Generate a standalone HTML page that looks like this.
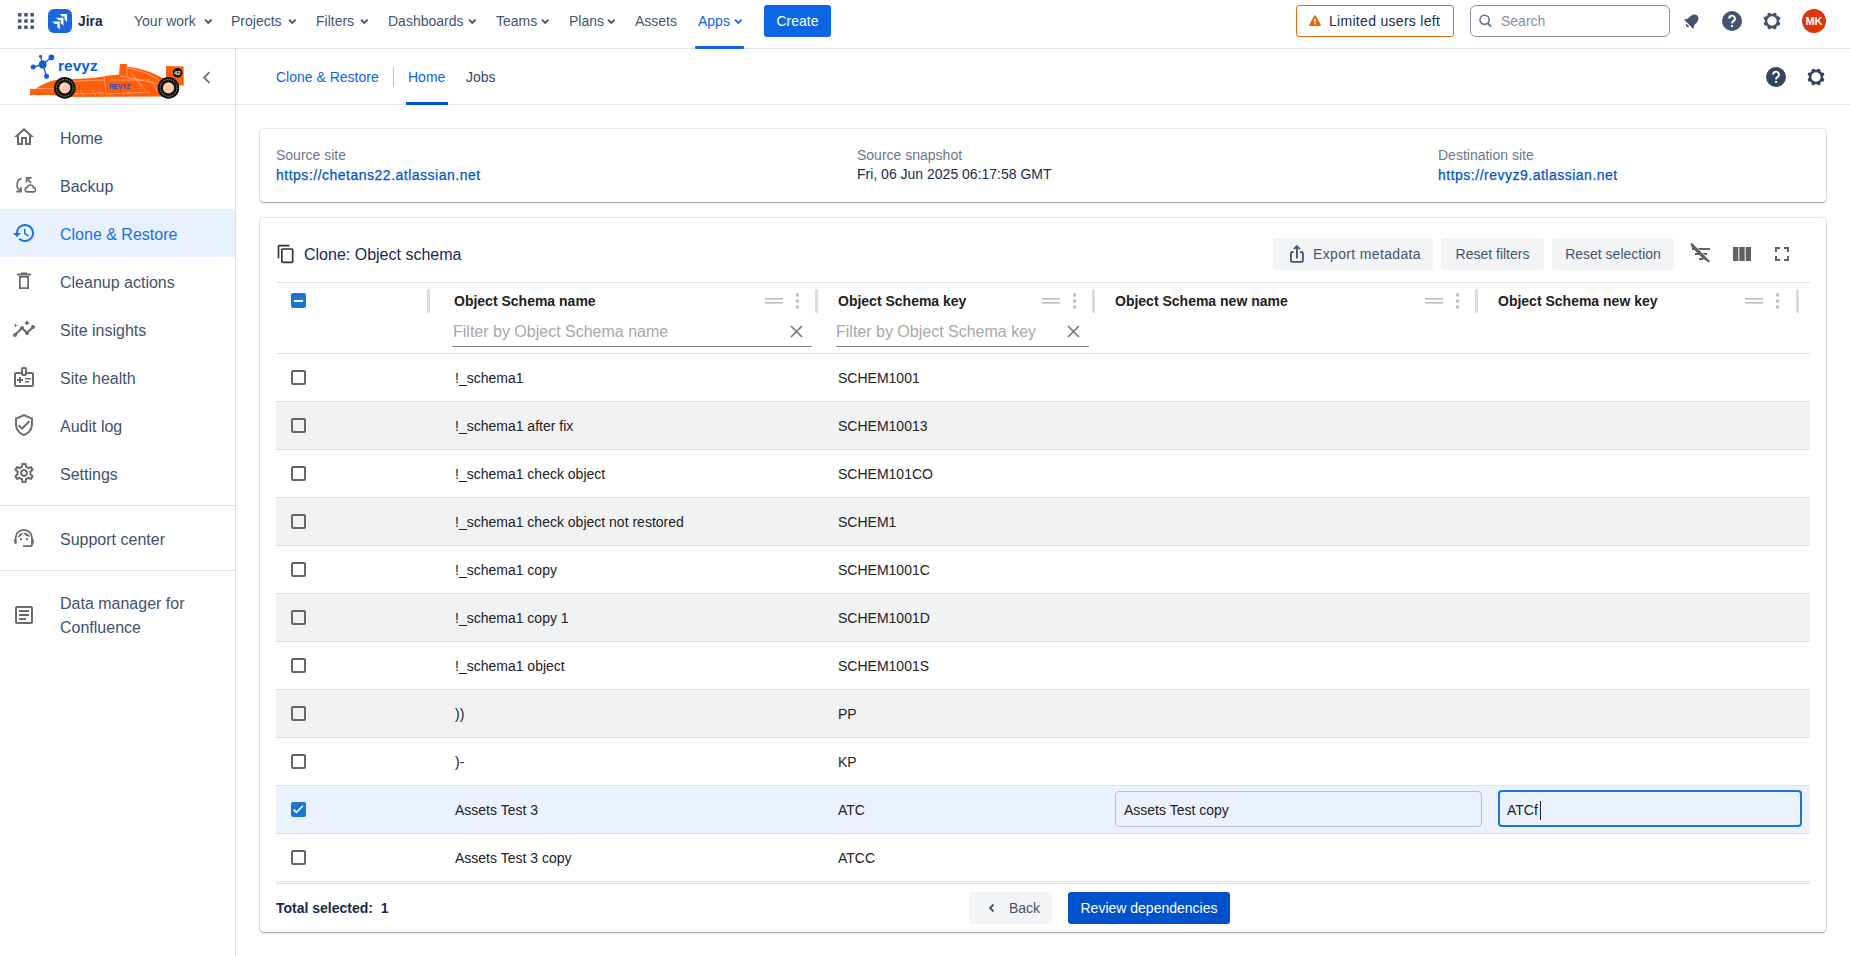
<!DOCTYPE html>
<html><head><meta charset="utf-8">
<style>
*{box-sizing:border-box;margin:0;padding:0}
html,body{width:1850px;height:956px;overflow:hidden;background:#fff;font-family:"Liberation Sans",sans-serif;color:#172b4d}
.a{position:absolute;white-space:nowrap}
svg{display:block}
/* top nav */
#top{position:absolute;left:0;top:0;width:1850px;height:49px;border-bottom:1px solid #dcdfe4;background:#fff}
.nav{font-size:14px;line-height:20px;color:#44546f;top:11px}
.chev{position:absolute;top:18px;margin-left:.5px}
/* sidebar */
#side{position:absolute;left:0;top:49px;width:236px;height:907px;border-right:1px solid #e0e0e0;background:#fff}
.si{position:absolute;left:0;width:235px;height:48px}
.si .t{position:absolute;left:60px;top:16px;font-size:16px;line-height:20px;color:#42526e}
.si svg{position:absolute;left:12px;top:12px}
/* main */
#hdr{position:absolute;left:236px;top:49px;width:1614px;height:56px;border-bottom:1px solid #e4e6ea}
.card{position:absolute;background:#fff;border-radius:4px;box-shadow:0 0 0 1px rgba(9,30,66,.09),0 1px 1px rgba(9,30,66,.28),0 1px 3px rgba(9,30,66,.1)}
.lbl{font-size:14px;line-height:20px;color:#6b778c}
.lnk{font-size:14px;line-height:20px;color:#0055cc;letter-spacing:.5px;-webkit-text-stroke:.25px #0055cc}
.btn{position:absolute;height:32px;border-radius:3px;background:#f3f4f6;font-size:14px;line-height:32px;color:#44546f}
.row{position:absolute;left:276px;width:1534px;height:48px;border-bottom:1px solid #e0e0e0}
.row .c{position:absolute;top:14px;font-size:14px;line-height:20px;color:#212121}
.cb{position:absolute;left:291px;width:15px;height:15px;border:2px solid #666;border-radius:2px}
.hd{font-size:14px;line-height:20px;font-weight:bold;color:#212121;top:291px}
.ph{font-size:16px;line-height:20px;color:#a8a8a8;top:322px}
.ul{position:absolute;top:346px;height:1px;background:#8a8a8a}
.sep{position:absolute;top:289px;width:3px;height:24px;border-radius:2px;background:#dcdcdc}
</style></head>
<body>
<div id="top">
 <svg class="a" style="left:18px;top:13px" width="16" height="16" viewBox="0 0 16 16" fill="#44546f">
  <rect x="0" y="0" width="3.5" height="3.5" rx=".6"/><rect x="6.2" y="0" width="3.5" height="3.5" rx=".6"/><rect x="12.4" y="0" width="3.5" height="3.5" rx=".6"/>
  <rect x="0" y="6.2" width="3.5" height="3.5" rx=".6"/><rect x="6.2" y="6.2" width="3.5" height="3.5" rx=".6"/><rect x="12.4" y="6.2" width="3.5" height="3.5" rx=".6"/>
  <rect x="0" y="12.4" width="3.5" height="3.5" rx=".6"/><rect x="6.2" y="12.4" width="3.5" height="3.5" rx=".6"/><rect x="12.4" y="12.4" width="3.5" height="3.5" rx=".6"/>
 </svg>
 <svg class="a" style="left:48px;top:9px" width="24" height="24" viewBox="0 0 24 24">
  <rect width="24" height="24" rx="6" fill="#1868db"/>
  <path fill="#fff" d="M11.7 4.9H19.1V13L16.6 10.5V7.4H14.2Z"/><path fill="#fff" d="M8 8.7H15.4V16.8L12.9 14.3V11.2H10.5Z"/><path fill="#fff" d="M4.4 12.4H11.8V20.5L9.3 18V14.9H6.9Z"/>
 </svg>
 <div class="a" style="left:78px;top:11px;font-size:15px;line-height:20px;font-weight:bold;color:#172b4d;transform:scaleX(.92);transform-origin:0 0">Jira</div>
 <div class="a nav" style="left:134px">Your work</div>
 <svg class="chev" style="left:203px" width="9" height="7" viewBox="0 0 9 7"><path d="M1 1.6l3.3 3.3 3.3-3.3" stroke="#44546f" stroke-width="1.8" fill="none"/></svg>
 <div class="a nav" style="left:231px">Projects</div>
 <svg class="chev" style="left:287px" width="9" height="7" viewBox="0 0 9 7"><path d="M1 1.6l3.3 3.3 3.3-3.3" stroke="#44546f" stroke-width="1.8" fill="none"/></svg>
 <div class="a nav" style="left:316px">Filters</div>
 <svg class="chev" style="left:359px" width="9" height="7" viewBox="0 0 9 7"><path d="M1 1.6l3.3 3.3 3.3-3.3" stroke="#44546f" stroke-width="1.8" fill="none"/></svg>
 <div class="a nav" style="left:388px">Dashboards</div>
 <svg class="chev" style="left:467px" width="9" height="7" viewBox="0 0 9 7"><path d="M1 1.6l3.3 3.3 3.3-3.3" stroke="#44546f" stroke-width="1.8" fill="none"/></svg>
 <div class="a nav" style="left:496px">Teams</div>
 <svg class="chev" style="left:540px" width="9" height="7" viewBox="0 0 9 7"><path d="M1 1.6l3.3 3.3 3.3-3.3" stroke="#44546f" stroke-width="1.8" fill="none"/></svg>
 <div class="a nav" style="left:569px">Plans</div>
 <svg class="chev" style="left:606px" width="9" height="7" viewBox="0 0 9 7"><path d="M1 1.6l3.3 3.3 3.3-3.3" stroke="#44546f" stroke-width="1.8" fill="none"/></svg>
 <div class="a nav" style="left:635px">Assets</div>
 <div class="a nav" style="left:698px;color:#0c66e4">Apps</div>
 <svg class="chev" style="left:733px" width="9" height="7" viewBox="0 0 9 7"><path d="M1 1.6l3.3 3.3 3.3-3.3" stroke="#0c66e4" stroke-width="1.8" fill="none"/></svg>
 <div class="a" style="left:695px;top:46px;width:49px;height:3px;background:#0c66e4;border-radius:1px"></div>
 <div class="a" style="left:764px;top:5px;width:67px;height:32px;border-radius:3px;background:#0c66e4;color:#fff;font-size:14px;line-height:32px;text-align:center">Create</div>

 <div class="a" style="left:1296px;top:5px;width:158px;height:32px;border:1px solid #e56910;border-radius:3px"></div>
 <svg class="a" style="left:1309px;top:15px" width="12" height="11" viewBox="0 0 12 11"><path d="M6 .9L11.2 10.2H.8z" fill="#e56910" stroke="#e56910" stroke-linejoin="round" stroke-width="1.4"/><rect x="5.3" y="3.6" width="1.4" height="3.6" fill="#fff"/><rect x="5.3" y="8" width="1.4" height="1.4" fill="#fff"/></svg>
 <div class="a nav" style="left:1329px;color:#172b4d;letter-spacing:.3px">Limited users left</div>

 <div class="a" style="left:1470px;top:5px;width:200px;height:32px;border:1px solid #8590a2;border-radius:6px"></div>
 <svg class="a" style="left:1479px;top:14px" width="13" height="14" viewBox="0 0 13 14"><circle cx="5.6" cy="5.8" r="4.6" stroke="#626f86" stroke-width="1.6" fill="none"/><path d="M9 9.4l3 3.2" stroke="#626f86" stroke-width="1.8"/></svg>
 <div class="a nav" style="left:1501px;color:#8590a2">Search</div>

 <svg class="a" style="left:1678px;top:8px" width="26" height="26" viewBox="0 0 26 26"><g transform="translate(10.65 16.25) rotate(45)" fill="#44546f"><path d="M-6.8 0L-4.6 -3.2V-6.5C-4.6 -10 -2.6 -12.2 0 -12.2S4.6 -10 4.6 -6.5V-3.2L6.8 0Z"/><path d="M-1.9 1.2A1.9 1.9 0 0 0 1.9 1.2Z"/></g></svg>
 <svg class="a" style="left:1722px;top:11px" width="20" height="20" viewBox="0 0 20 20"><circle cx="10" cy="10" r="10" fill="#44546f"/><path d="M7.1 7.6a2.9 2.9 0 1 1 4.3 2.5c-.9.5-1.3 1-1.3 1.9v.6" stroke="#fff" stroke-width="1.9" fill="none"/><rect x="9.1" y="14" width="2" height="2" fill="#fff"/></svg>
 <svg class="a" style="left:1762.5px;top:11.9px" width="18" height="18" viewBox="-9 -9 18 18"><g fill="#44546f"><rect x="-1.7" y="-8.7" width="3.4" height="3.6" rx="1.3" transform="rotate(22.5)"/><rect x="-1.7" y="-8.7" width="3.4" height="3.6" rx="1.3" transform="rotate(67.5)"/><rect x="-1.7" y="-8.7" width="3.4" height="3.6" rx="1.3" transform="rotate(112.5)"/><rect x="-1.7" y="-8.7" width="3.4" height="3.6" rx="1.3" transform="rotate(157.5)"/><rect x="-1.7" y="-8.7" width="3.4" height="3.6" rx="1.3" transform="rotate(202.5)"/><rect x="-1.7" y="-8.7" width="3.4" height="3.6" rx="1.3" transform="rotate(247.5)"/><rect x="-1.7" y="-8.7" width="3.4" height="3.6" rx="1.3" transform="rotate(292.5)"/><rect x="-1.7" y="-8.7" width="3.4" height="3.6" rx="1.3" transform="rotate(337.5)"/></g><circle r="6" stroke="#44546f" stroke-width="2.5" fill="none"/></svg>
 <div class="a" style="left:1802px;top:9px;width:24px;height:24px;border-radius:50%;background:#de350b;color:#fff;font-size:11px;font-weight:bold;line-height:24px;text-align:center">MK</div>
</div>
<div id="side">
 <!-- logo -->
 <svg class="a" style="left:28px;top:3px" width="160" height="50" viewBox="28 52 160 50">
  <g stroke="#0b5fd9" stroke-width="1.3">
   <line x1="42.7" y1="64.5" x2="40.5" y2="56.3"/><line x1="42.7" y1="64.5" x2="51.4" y2="57.4"/>
   <line x1="42.7" y1="64.5" x2="33.2" y2="67.1"/><line x1="42.7" y1="64.5" x2="46.6" y2="76.2"/>
  </g>
  <g fill="#0b5fd9">
   <circle cx="42.7" cy="64.5" r="3.9"/><circle cx="40.5" cy="56.3" r="1.6"/><circle cx="51.4" cy="57.4" r="2.8"/>
   <circle cx="33.2" cy="67.1" r="2.5"/><circle cx="46.6" cy="76.2" r="2.5"/>
  </g>
  <text x="58" y="70.6" font-family="Liberation Sans" font-weight="bold" font-size="15.5" fill="#0b5fd9">revyz</text>
  <g fill="#ff5f0a">
   <path d="M30 89h24v6H30z"/>
   <path d="M36 88.5C42 84 50 81 56 80L93 78L109 75.5L119 74.5L120 64H127V66.5C140 68 155 73 164 79L166 80V96.5L60 97L54 95L36 92Z"/>
   <path d="M166 66L183.5 66.5L183.8 85.5L166 85Z"/>
  </g>
  <g stroke="#fff" stroke-width=".45" fill="none" opacity=".85">
   <path d="M36 88.6H55M58 82L104 80M104 76L106 94M106 94L150 92M130 72L145 90M120 76L160 84M70 94L104 93M128 68C140 70 152 75 160 81M110 80L150 80M80 90L84 96M92 90L96 96M60 84H75M127 66.5V76M152 82L158 92"/>
  </g>
  <text x="108.9" y="88.8" font-family="Liberation Sans" font-weight="bold" font-size="6.5" fill="#1f4fbf">REVYZ</text>
  <circle cx="177.6" cy="72.8" r="4.8" fill="#111"/>
  <text x="174" y="75" font-family="Liberation Sans" font-weight="bold" font-size="5.8" fill="#fff">42</text>
  <circle cx="64.8" cy="87.9" r="10.8" fill="#111"/>
  <circle cx="64.8" cy="87.9" r="8.4" fill="none" stroke="#fff" stroke-width="1" stroke-dasharray="1 1.2" opacity=".7"/>
  <circle cx="64.8" cy="87.9" r="5.6" fill="#ffc9a8"/><circle cx="64.8" cy="87.9" r="3.2" fill="none" stroke="#fff" stroke-width=".6" stroke-dasharray=".8 .8"/>
  <circle cx="168.5" cy="87.9" r="10.8" fill="#111"/>
  <circle cx="168.5" cy="87.9" r="8.4" fill="none" stroke="#fff" stroke-width="1" stroke-dasharray="1 1.2" opacity=".7"/>
  <circle cx="168.5" cy="87.9" r="5.6" fill="#ffc9a8"/><circle cx="168.5" cy="87.9" r="3.2" fill="none" stroke="#fff" stroke-width=".6" stroke-dasharray=".8 .8"/>
 </svg>
 <svg class="a" style="left:202px;top:22px" width="9" height="13" viewBox="0 0 9 13"><path d="M7.5 1.2L2 6.5l5.5 5.3" stroke="#707070" stroke-width="1.8" fill="none"/></svg>
 <div class="a" style="left:0;top:55px;width:235px;height:1px;background:#e4e6ea"></div>

 <div class="si" style="top:64px">
  <svg width="24" height="24" viewBox="0 0 24 24" fill="#6b6b6b"><path d="M12 5.69l5 4.5V18h-2v-6H9v6H7v-7.81l5-4.5M12 3L2 12h3v8h6v-6h2v6h6v-8h3L12 3z"/></svg>
  <div class="t">Home</div></div>
 <div class="si" style="top:112px">
  <svg width="24" height="24" viewBox="12 173 24 24" fill="none" stroke="#6b6b6b" stroke-width="1.7"><path d="M21.5 178.4A5.9 6.6 0 0 0 20.2 190.6"/><path d="M16.2 191.6H21V187.2"/><path d="M26.6 182.6V177.8H31.6M26.8 178L31 183.3"/><path d="M26.6 191.8H33.4A2.1 2.1 0 0 0 33.6 187.6A3.3 3.3 0 0 0 27.2 187.4A2.3 2.3 0 0 0 26.6 191.8Z"/></svg>
  <div class="t">Backup</div></div>
 <div class="si" style="top:160px;background:#e8f1fe">
  <svg width="24" height="24" viewBox="0 0 24 24" fill="#1a6fe0"><path d="M13 3c-4.97 0-9 4.03-9 9H1l3.89 3.89.07.14L9 12H6c0-3.87 3.13-7 7-7s7 3.13 7 7-3.13 7-7 7c-1.93 0-3.68-.79-4.94-2.06l-1.42 1.42C8.27 19.99 10.51 21 13 21c4.97 0 9-4.03 9-9s-4.03-9-9-9zm-1 5v5l4.28 2.54.72-1.21-3.5-2.08V8H12z"/></svg>
  <div class="t" style="color:#1a6fe0">Clone &amp; Restore</div></div>
 <div class="si" style="top:208px">
  <svg width="24" height="24" viewBox="0 0 24 24" fill="#6b6b6b"><path d="M7 7h10v13H7zM8.8 8.8v9.4h6.4V8.8zM5 4.5h14v2H5zM9 3.5h6v1.5H9z"/></svg>
  <div class="t">Cleanup actions</div></div>
 <div class="si" style="top:256px">
  <svg width="24" height="24" viewBox="0 0 24 24" fill="#6b6b6b"><path d="M21 8c-1.45 0-2.26 1.44-1.93 2.51l-3.55 3.56c-.3-.09-.74-.09-1.04 0l-2.55-2.55C12.27 10.45 11.46 9 10 9c-1.45 0-2.27 1.44-1.93 2.52l-4.56 4.55C2.44 15.74 1 16.55 1 18c0 1.1.9 2 2 2 1.45 0 2.26-1.44 1.93-2.51l4.55-4.56c.3.09.74.09 1.04 0l2.55 2.55C12.73 16.55 13.54 18 15 18c1.45 0 2.27-1.44 1.93-2.52l3.56-3.55c1.07.33 2.51-.48 2.51-1.930 0-1.1-.9-2-2-2z"/><path d="M15 9l.94-2.07L18 6l-2.06-.93L15 3l-.92 2.07L12 6l2.08.93zM3.5 11L4 9l2-.5L4 8l-.5-2L3 8l-2 .5L3 9z"/></svg>
  <div class="t">Site insights</div></div>
 <div class="si" style="top:304px">
  <svg width="24" height="24" viewBox="0 0 24 24" fill="#6b6b6b"><path d="M20 7h-5V4c0-1.1-.9-2-2-2h-2c-1.1 0-2 .9-2 2v3H4c-1.1 0-2 .9-2 2v11c0 1.1.9 2 2 2h16c1.1 0 2-.9 2-2V9c0-1.1-.9-2-2-2zM11 4h2v5h-2V4zm9 16H4V9h5c0 1.1.9 2 2 2h2c1.1 0 2-.9 2-2h5v11zm-9-4H9v2H7v-2H5v-2h2v-2h2v2h2v2zm2-1.5V13h6v1.5h-6zm0 3V16h4v1.5h-4z"/></svg>
  <div class="t">Site health</div></div>
 <div class="si" style="top:352px">
  <svg width="24" height="24" viewBox="0 0 24 24" fill="#6b6b6b"><path d="M12 1L3 5v6c0 5.55 3.84 10.74 9 12 5.16-1.26 9-6.45 9-12V5l-9-4zm7 10c0 4.52-2.98 8.69-7 9.93-4.02-1.24-7-5.41-7-9.93V6.3l7-3.11 7 3.11V11zm-11.59.59L6 13l4 4 8-8-1.41-1.42L10 14.17z"/></svg>
  <div class="t">Audit log</div></div>
 <div class="si" style="top:400px">
  <svg width="24" height="24" viewBox="0 0 24 24" fill="#6b6b6b"><path d="M19.43 12.98c.04-.32.07-.64.07-.98 0-.34-.03-.66-.07-.98l2.11-1.65c.19-.15.24-.42.12-.64l-2-3.46a.5.5 0 0 0-.61-.22l-2.49 1c-.52-.4-1.08-.73-1.69-.98l-.38-2.65A.488.488 0 0 0 14 2h-4c-.25 0-.46.18-.49.42l-.38 2.65c-.61.25-1.17.59-1.69.98l-2.49-1a.566.566 0 0 0-.18-.03c-.17 0-.34.09-.43.25l-2 3.46c-.13.22-.07.49.12.64l2.11 1.65c-.04.32-.07.65-.07.98s.03.66.07.98l-2.11 1.65c-.19.15-.24.42-.12.64l2 3.46a.5.5 0 0 0 .61.22l2.49-1c.52.4 1.08.73 1.69.98l.38 2.65c.03.24.24.42.49.42h4c.25 0 .46-.18.49-.42l.38-2.65c.61-.25 1.17-.59 1.69-.98l2.49 1c.06.02.12.03.18.03.17 0 .34-.09.43-.25l2-3.46c.12-.22.07-.49-.12-.64l-2.11-1.65zm-1.98-1.71c.04.31.05.52.05.73 0 .21-.02.43-.05.73l-.14 1.13.89.7 1.08.84-.7 1.21-1.27-.51-1.04-.42-.9.68c-.43.32-.84.56-1.25.73l-1.06.43-.16 1.13-.2 1.35h-1.4l-.19-1.35-.16-1.13-1.06-.43c-.43-.18-.83-.41-1.23-.71l-.91-.7-1.06.43-1.27.51-.7-1.21 1.08-.84.89-.7-.14-1.13c-.03-.31-.05-.54-.05-.74s.02-.43.05-.73l.14-1.13-.89-.7-1.08-.84.7-1.21 1.27.51 1.04.42.9-.68c.43-.32.84-.56 1.25-.73l1.06-.43.16-1.13.2-1.35h1.39l.19 1.35.16 1.13 1.06.43c.43.18.83.41 1.23.71l.91.7 1.06-.43 1.27-.51.7 1.21-1.07.85-.89.7.14 1.13zM12 8c-2.21 0-4 1.79-4 4s1.79 4 4 4 4-1.79 4-4-1.79-4-4-4zm0 6c-1.1 0-2-.9-2-2s.9-2 2-2 2 .9 2 2-.9 2-2 2z"/></svg>
  <div class="t">Settings</div></div>
 <div class="a" style="left:0;top:456px;width:235px;height:1px;background:#e0e0e0"></div>
 <div class="si" style="top:465px">
  <svg style="top:13px" width="24" height="24" viewBox="0 0 24 24"><g fill="none" stroke="#6b6b6b" stroke-width="1.8"><path d="M3.6 16.5V11A8.2 8.2 0 0 1 20 11V17.6Q20 19.2 18.4 19.2H11"/></g><g fill="#6b6b6b"><rect x="2.2" y="11.8" width="2.2" height="4.8" rx=".9"/><rect x="19.6" y="12" width="2.2" height="4.6" rx=".9"/><rect x="8" y="11.2" width="2" height="2"/><rect x="14" y="11.2" width="2" height="2"/><path d="M5.6 10.8Q6.6 6.6 10.9 5.4Q9.9 9.4 5.6 10.8Z"/><path d="M18.3 9.6Q13.3 9.8 11.4 5.4Q16.3 5.8 18.3 9.6Z"/></g></svg>
  <div class="t">Support center</div></div>
 <div class="a" style="left:0;top:521px;width:235px;height:1px;background:#e0e0e0"></div>
 <div class="si" style="top:543px;height:72px">
  <svg style="top:11px" width="24" height="24" viewBox="0 0 24 24" fill="#6b6b6b"><path d="M19 5v14H5V5h14m0-2H5c-1.1 0-2 .9-2 2v14c0 1.1.9 2 2 2h14c1.1 0 2-.9 2-2V5c0-1.1-.9-2-2-2zM14 17H7v-2h7v2zm3-4H7v-2h10v2zm0-4H7V7h10v2z"/></svg>
  <div class="t" style="top:0;line-height:24px">Data manager for<br>Confluence</div></div>
</div>
<div id="hdr"></div>
<div class="a" style="left:276px;top:67px;font-size:14px;line-height:20px;color:#0c66e4">Clone &amp; Restore</div>
<div class="a" style="left:393px;top:67px;width:1px;height:20px;background:#c1c7d0"></div>
<div class="a" style="left:408px;top:67px;font-size:14px;line-height:20px;color:#0c66e4">Home</div>
<div class="a" style="left:406px;top:102px;width:42px;height:3px;background:#0052cc"></div>
<div class="a" style="left:466px;top:67px;font-size:14px;line-height:20px;color:#3b4a66">Jobs</div>
<svg class="a" style="left:1766px;top:67px" width="20" height="20" viewBox="0 0 20 20"><circle cx="10" cy="10" r="10" fill="#344563"/><path d="M7.1 7.6a2.9 2.9 0 1 1 4.3 2.5c-.9.5-1.3 1-1.3 1.9v.6" stroke="#fff" stroke-width="1.9" fill="none"/><rect x="9.1" y="14" width="2" height="2" fill="#fff"/></svg>
<svg class="a" style="left:1806.5px;top:67.7px" width="18" height="18" viewBox="-9 -9 18 18"><g fill="#344563"><rect x="-1.7" y="-8.7" width="3.4" height="3.6" rx="1.3" transform="rotate(22.5)"/><rect x="-1.7" y="-8.7" width="3.4" height="3.6" rx="1.3" transform="rotate(67.5)"/><rect x="-1.7" y="-8.7" width="3.4" height="3.6" rx="1.3" transform="rotate(112.5)"/><rect x="-1.7" y="-8.7" width="3.4" height="3.6" rx="1.3" transform="rotate(157.5)"/><rect x="-1.7" y="-8.7" width="3.4" height="3.6" rx="1.3" transform="rotate(202.5)"/><rect x="-1.7" y="-8.7" width="3.4" height="3.6" rx="1.3" transform="rotate(247.5)"/><rect x="-1.7" y="-8.7" width="3.4" height="3.6" rx="1.3" transform="rotate(292.5)"/><rect x="-1.7" y="-8.7" width="3.4" height="3.6" rx="1.3" transform="rotate(337.5)"/></g><circle r="6" stroke="#344563" stroke-width="2.5" fill="none"/></svg>

<!-- card 1 -->
<div class="card" style="left:260px;top:129px;width:1566px;height:73px"></div>
<div class="a lbl" style="left:276px;top:145px">Source site</div>
<div class="a lnk" style="left:276px;top:165px">https://chetans22.atlassian.net</div>
<div class="a lbl" style="left:857px;top:145px">Source snapshot</div>
<div class="a" style="left:857px;top:164px;font-size:14px;line-height:20px;color:#172b4d">Fri, 06 Jun 2025 06:17:58 GMT</div>
<div class="a lbl" style="left:1438px;top:145px">Destination site</div>
<div class="a lnk" style="left:1438px;top:165px">https://revyz9.atlassian.net</div>

<!-- card 2 -->
<div class="card" style="left:260px;top:218px;width:1566px;height:714px"></div>
<svg class="a" style="left:276px;top:244px" width="20" height="20" viewBox="0 0 24 24" fill="#333"><path d="M16 1H4c-1.1 0-2 .9-2 2v14h2V3h12V1zm3 4H8c-1.1 0-2 .9-2 2v14c0 1.1.9 2 2 2h11c1.1 0 2-.9 2-2V7c0-1.1-.9-2-2-2zm0 16H8V7h11v14z"/></svg>
<div class="a" style="left:304px;top:245px;font-size:16px;line-height:20px;color:#172b4d">Clone: Object schema</div>

<div class="btn" style="left:1273px;top:238px;width:160px"></div>
<svg class="a" style="left:1287px;top:243px" width="20" height="22" viewBox="1287 243 20 22" fill="none" stroke="#44546f" stroke-width="1.8"><path d="M1293.6 252H1292.5A1.6 1.6 0 0 0 1290.9 253.6V260.3A1.6 1.6 0 0 0 1292.5 261.9H1301.3A1.6 1.6 0 0 0 1302.9 260.3V253.6A1.6 1.6 0 0 0 1301.3 252H1300.2"/><path d="M1296.9 258.6V246.2M1293.9 249.2L1296.9 246.2L1299.9 249.2"/></svg>
<div class="a" style="left:1313px;top:244px;font-size:14px;line-height:20px;color:#44546f;letter-spacing:.35px">Export metadata</div>
<div class="btn" style="left:1441px;top:238px;width:103px;text-align:center">Reset filters</div>
<div class="btn" style="left:1552px;top:238px;width:122px;text-align:center">Reset selection</div>
<svg class="a" style="left:1689px;top:242px" width="24" height="24" viewBox="0 0 24 24" fill="#616161"><path d="M10.83 8H21V6H8.83l2 2zm5 5H18v-2h-4.17l2 2zM14 16.83V18h-4v-2h3.17l-3-3H6v-2h2.17l-3-3H3V6h.17L1.39 2.22 2.8.81l18.38 18.38-1.41 1.41L14 16.83z"/></svg>
<svg class="a" style="left:1730px;top:242px" width="24" height="24" viewBox="0 0 24 24" fill="#616161"><path d="M14.67 5v14H9.33V5h5.34zm1 14H21V5h-5.33v14zm-7.34 0V5H3v14h5.33z"/></svg>
<svg class="a" style="left:1770px;top:242px" width="24" height="24" viewBox="0 0 24 24" fill="#616161"><path d="M7 14H5v5h5v-2H7v-3zm-2-4h2V7h3V5H5v5zm12 7h-3v2h5v-5h-2v3zM14 5v2h3v3h2V5h-5z"/></svg>

<!-- table header -->
<div class="a" style="left:276px;top:282px;width:1534px;height:1px;background:#e0e0e0"></div>
<div class="a" style="left:291px;top:293px;width:15px;height:15px;border-radius:2px;background:#1976d2"></div>
<div class="a" style="left:294px;top:299.5px;width:9px;height:2px;background:#fff"></div>
<div class="sep" style="left:427px"></div>
<div class="a hd" style="left:454px">Object Schema name</div>
<svg class="a" style="left:765px;top:297px" width="18" height="8" viewBox="0 0 18 8"><rect x="0" y="1" width="18" height="1.6" fill="#bdbdbd"/><rect x="0" y="5" width="18" height="1.6" fill="#bdbdbd"/></svg>
<svg class="a" style="left:795px;top:293px" width="5" height="16" viewBox="0 0 5 16" fill="#bdbdbd"><circle cx="2.5" cy="2" r="1.7"/><circle cx="2.5" cy="8" r="1.7"/><circle cx="2.5" cy="14" r="1.7"/></svg>
<div class="sep" style="left:815px"></div>
<div class="a ph" style="left:453px">Filter by Object Schema name</div>
<svg class="a" style="left:790px;top:325px" width="13" height="13" viewBox="0 0 13 13"><path d="M1 1l11 11M12 1L1 12" stroke="#757575" stroke-width="1.6"/></svg>
<div class="ul" style="left:452px;width:360px"></div>

<div class="a hd" style="left:838px">Object Schema key</div>
<svg class="a" style="left:1042px;top:297px" width="18" height="8" viewBox="0 0 18 8"><rect x="0" y="1" width="18" height="1.6" fill="#bdbdbd"/><rect x="0" y="5" width="18" height="1.6" fill="#bdbdbd"/></svg>
<svg class="a" style="left:1072px;top:293px" width="5" height="16" viewBox="0 0 5 16" fill="#bdbdbd"><circle cx="2.5" cy="2" r="1.7"/><circle cx="2.5" cy="8" r="1.7"/><circle cx="2.5" cy="14" r="1.7"/></svg>
<div class="sep" style="left:1092px"></div>
<div class="a ph" style="left:836px">Filter by Object Schema key</div>
<svg class="a" style="left:1067px;top:325px" width="13" height="13" viewBox="0 0 13 13"><path d="M1 1l11 11M12 1L1 12" stroke="#757575" stroke-width="1.6"/></svg>
<div class="ul" style="left:836px;width:253px"></div>

<div class="a hd" style="left:1115px">Object Schema new name</div>
<svg class="a" style="left:1425px;top:297px" width="18" height="8" viewBox="0 0 18 8"><rect x="0" y="1" width="18" height="1.6" fill="#bdbdbd"/><rect x="0" y="5" width="18" height="1.6" fill="#bdbdbd"/></svg>
<svg class="a" style="left:1455px;top:293px" width="5" height="16" viewBox="0 0 5 16" fill="#bdbdbd"><circle cx="2.5" cy="2" r="1.7"/><circle cx="2.5" cy="8" r="1.7"/><circle cx="2.5" cy="14" r="1.7"/></svg>
<div class="sep" style="left:1475px"></div>

<div class="a hd" style="left:1498px">Object Schema new key</div>
<svg class="a" style="left:1745px;top:297px" width="18" height="8" viewBox="0 0 18 8"><rect x="0" y="1" width="18" height="1.6" fill="#bdbdbd"/><rect x="0" y="5" width="18" height="1.6" fill="#bdbdbd"/></svg>
<svg class="a" style="left:1775px;top:293px" width="5" height="16" viewBox="0 0 5 16" fill="#bdbdbd"><circle cx="2.5" cy="2" r="1.7"/><circle cx="2.5" cy="8" r="1.7"/><circle cx="2.5" cy="14" r="1.7"/></svg>
<div class="sep" style="left:1796px"></div>
<div class="a" style="left:276px;top:353px;width:1534px;height:1px;background:#e0e0e0"></div>
<div class="a" style="left:276px;top:354px;width:1534px;height:8px;background:linear-gradient(rgba(0,0,0,.06),rgba(0,0,0,0))"></div>

<!-- rows -->
<div class="row" style="top:354px;background:#fff">
 <div class="a" style="left:15px;top:16px;width:15px;height:15px;border:2px solid #666;border-radius:2px"></div>
 <div class="c" style="left:179px">!_schema1</div>
 <div class="c" style="left:562px">SCHEM1001</div>
</div>
<div class="row" style="top:402px;background:#f1f2f4">
 <div class="a" style="left:15px;top:16px;width:15px;height:15px;border:2px solid #666;border-radius:2px"></div>
 <div class="c" style="left:179px">!_schema1 after fix</div>
 <div class="c" style="left:562px">SCHEM10013</div>
</div>
<div class="row" style="top:450px;background:#fff">
 <div class="a" style="left:15px;top:16px;width:15px;height:15px;border:2px solid #666;border-radius:2px"></div>
 <div class="c" style="left:179px">!_schema1 check object</div>
 <div class="c" style="left:562px">SCHEM101CO</div>
</div>
<div class="row" style="top:498px;background:#f1f2f4">
 <div class="a" style="left:15px;top:16px;width:15px;height:15px;border:2px solid #666;border-radius:2px"></div>
 <div class="c" style="left:179px">!_schema1 check object not restored</div>
 <div class="c" style="left:562px">SCHEM1</div>
</div>
<div class="row" style="top:546px;background:#fff">
 <div class="a" style="left:15px;top:16px;width:15px;height:15px;border:2px solid #666;border-radius:2px"></div>
 <div class="c" style="left:179px">!_schema1 copy</div>
 <div class="c" style="left:562px">SCHEM1001C</div>
</div>
<div class="row" style="top:594px;background:#f1f2f4">
 <div class="a" style="left:15px;top:16px;width:15px;height:15px;border:2px solid #666;border-radius:2px"></div>
 <div class="c" style="left:179px">!_schema1 copy 1</div>
 <div class="c" style="left:562px">SCHEM1001D</div>
</div>
<div class="row" style="top:642px;background:#fff">
 <div class="a" style="left:15px;top:16px;width:15px;height:15px;border:2px solid #666;border-radius:2px"></div>
 <div class="c" style="left:179px">!_schema1 object</div>
 <div class="c" style="left:562px">SCHEM1001S</div>
</div>
<div class="row" style="top:690px;background:#f1f2f4">
 <div class="a" style="left:15px;top:16px;width:15px;height:15px;border:2px solid #666;border-radius:2px"></div>
 <div class="c" style="left:179px">))</div>
 <div class="c" style="left:562px">PP</div>
</div>
<div class="row" style="top:738px;background:#fff">
 <div class="a" style="left:15px;top:16px;width:15px;height:15px;border:2px solid #666;border-radius:2px"></div>
 <div class="c" style="left:179px">)-</div>
 <div class="c" style="left:562px">KP</div>
</div>
<div class="row" style="top:786px;background:#e9f2fe">
 <div class="a" style="left:15px;top:16px;width:15px;height:15px;border-radius:2px;background:#1976d2"></div>
 <svg class="a" style="left:15px;top:16px" width="15" height="15" viewBox="0 0 15 15"><path d="M2.6 7.6L5.4 10.4L12 3.8" stroke="#fff" stroke-width="1.6" fill="none"/></svg>
 <div class="c" style="left:179px">Assets Test 3</div>
 <div class="c" style="left:562px">ATC</div>
 <div class="a" style="left:839px;top:5px;width:367px;height:36px;border:1px solid #bdbdbd;border-radius:4px"></div>
 <div class="c" style="left:848px">Assets Test copy</div>
 <div class="a" style="left:1222px;top:4px;width:304px;height:37px;border:2px solid #1976d2;border-radius:4px"></div>
 <div class="c" style="left:1231px">ATCf</div>
 <div class="a" style="left:1264px;top:15px;width:1px;height:19px;background:#212121"></div>
</div>
<div class="row" style="top:834px;background:#fff">
 <div class="a" style="left:15px;top:16px;width:15px;height:15px;border:2px solid #666;border-radius:2px"></div>
 <div class="c" style="left:179px">Assets Test 3 copy</div>
 <div class="c" style="left:562px">ATCC</div>
</div>

<!-- footer -->
<div class="a" style="left:276px;top:881px;width:1534px;height:1px;background:#e0e0e0"></div>
<div class="a" style="left:276px;top:883px;width:1534px;height:1px;background:#e0e0e0"></div>
<div class="a" style="left:276px;top:898px;font-size:14px;line-height:20px;font-weight:bold;color:#172b4d">Total selected:&nbsp; 1</div>
<div class="btn" style="left:969px;top:892px;width:83px"></div>
<svg class="a" style="left:988px;top:903px" width="8" height="10" viewBox="0 0 8 10"><path d="M5.5 1.5L2 5l3.5 3.5" stroke="#44546f" stroke-width="1.8" fill="none"/></svg>
<div class="a" style="left:1009px;top:898px;font-size:14px;line-height:20px;color:#44546f">Back</div>
<div class="a" style="left:1068px;top:892px;width:162px;height:32px;border-radius:3px;background:#0052cc;color:#fff;font-size:14px;line-height:32px;text-align:center">Review dependencies</div>
</body></html>
